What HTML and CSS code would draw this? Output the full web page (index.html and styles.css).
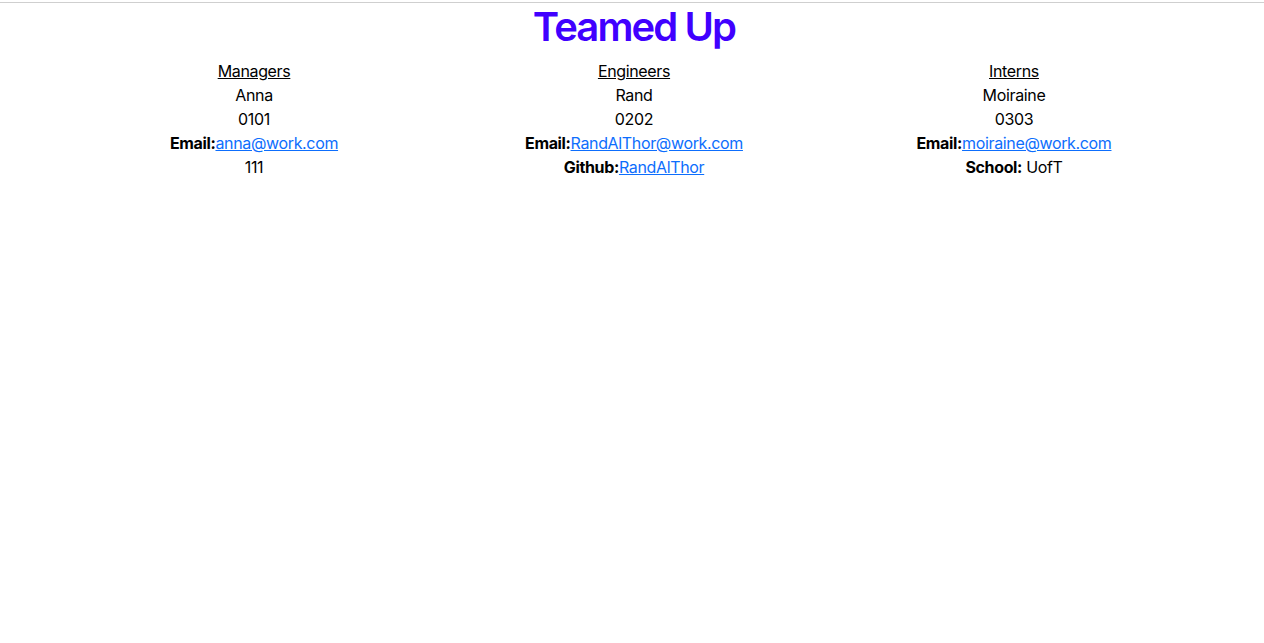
FILE: index.html
```html
<!DOCTYPE html>
<html lang="en">
<head>
<meta charset="utf-8">
<title>Teamed Up</title>
<link rel="stylesheet" href="styles.css">
</head>
<body>
<div class="topline"></div>
<div class="page">
  <h1 class="title">Teamed Up</h1>
  <div class="team">
    <div class="col">
      <div class="role">Managers</div>
      <div>Anna</div>
      <div>0101</div>
      <div><b>Email:</b><a href="#">anna@work.com</a></div>
      <div>111</div>
    </div>
    <div class="col">
      <div class="role">Engineers</div>
      <div>Rand</div>
      <div>0202</div>
      <div><b>Email:</b><a href="#">RandAlThor@work.com</a></div>
      <div><b>Github:</b><a href="#">RandAlThor</a></div>
    </div>
    <div class="col">
      <div class="role">Interns</div>
      <div>Moiraine</div>
      <div>0303</div>
      <div><b>Email:</b><a href="#">moiraine@work.com</a></div>
      <div><b>School:</b> UofT</div>
    </div>
  </div>
</div>
</body>
</html>
```
FILE: styles.css
```css
html, body {
  margin: 0;
  padding: 0;
  background: #fff;
}
body {
  font-family: Inter, "Noto Sans", sans-serif;
  font-size: 16px;
  line-height: 24px;
  color: #000;
}
.topline {
  margin-top: 2px;
  border-top: 1px solid #cfcfcf;
}
.page {
  padding-left: 4px;
}
.title {
  margin: 0 0 8px 0;
  text-align: center;
  font-size: 40px;
  line-height: 48px;
  font-weight: 600;
  color: #4000ff;
  letter-spacing: -1.9px;
}
.team {
  width: 1140px;
  margin: 0 auto;
  display: grid;
  grid-template-columns: repeat(3, 1fr);
  letter-spacing: -0.35px;
}
.col {
  text-align: center;
}
.role {
  text-decoration: underline;
}
.col b {
  font-weight: 700;
}
.col a {
  color: #0d6efd;
  text-decoration: underline;
}
```
